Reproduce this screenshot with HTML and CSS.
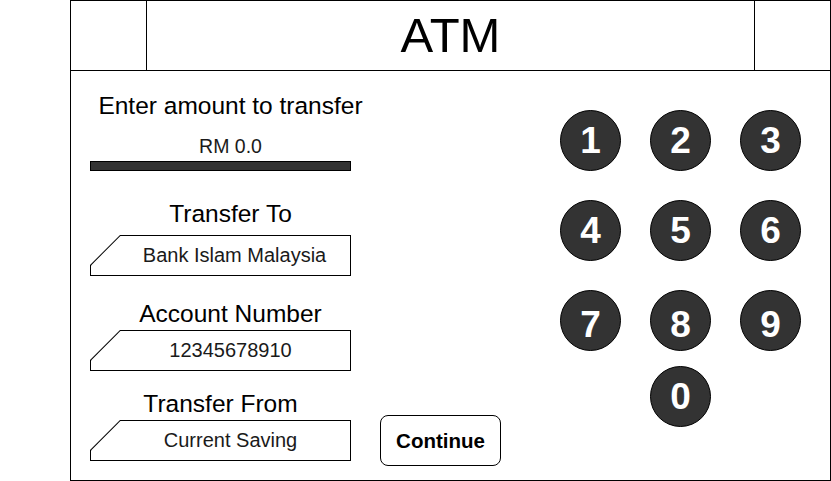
FILE: index.html
```html
<!DOCTYPE html>
<html lang="en">
<head>
<meta charset="utf-8">
<title>ATM</title>
<link rel="stylesheet" href="styles.css">
</head>
<body>
<div class="screen">
  <header class="header">
    <div class="header-side"></div>
    <div class="header-title">ATM</div>
    <div class="header-side"></div>
  </header>
  <main class="body">
    <section class="form">
      <div class="amount-title">Enter amount to transfer</div>
      <div class="amount-value">RM 0.0</div>
      <div class="amount-bar"></div>

      <div class="group group-first">
        <div class="label label-wide">Transfer To</div>
        <div class="field"><div class="field-inner field-inner-shift">Bank Islam Malaysia</div></div>
      </div>

      <div class="group group-second">
        <div class="label label-tight label-wide">Account Number</div>
        <div class="field"><div class="field-inner">12345678910</div></div>
      </div>

      <div class="last-row">
        <div class="group group-third">
          <div class="label label-tight">Transfer From</div>
          <div class="field"><div class="field-inner">Current Saving</div></div>
        </div>
        <button class="continue">Continue</button>
      </div>
    </section>

    <section class="keypad">
      <div class="key">1</div>
      <div class="key">2</div>
      <div class="key">3</div>
      <div class="key">4</div>
      <div class="key">5</div>
      <div class="key">6</div>
      <div class="key key-low">7</div>
      <div class="key key-low">8</div>
      <div class="key key-low">9</div>
      <div class="key key-zero">0</div>
    </section>
  </main>
</div>
</body>
</html>
```

FILE: styles.css
```css
* {
  box-sizing: border-box;
}

html, body {
  margin: 0;
  padding: 0;
  background: #ffffff;
}

body {
  font-family: "Liberation Sans", Arial, sans-serif;
  color: #000;
}

.screen {
  margin-left: 70px;
  width: 761px;
  height: 481px;
  border: 1px solid #000;
  display: flex;
  flex-direction: column;
}

.header {
  display: grid;
  grid-template-columns: 75px 1fr 75px;
  height: 70px;
  border-bottom: 1px solid #000;
}

.header-title {
  border-left: 1px solid #000;
  border-right: 1px solid #000;
  text-align: center;
  font-size: 49px;
  line-height: 69px;
}

.body {
  flex: 1;
  display: flex;
  padding-left: 19px;
}

.form {
  flex: 0 0 470px;
  display: flex;
  flex-direction: column;
}

.amount-title {
  width: 281px;
  text-align: center;
  font-size: 24.5px;
  line-height: 28px;
  margin-top: 21px;
}

.amount-value {
  width: 281px;
  text-align: center;
  font-size: 19.5px;
  line-height: 22px;
  margin-top: 15px;
  color: #1a1a1a;
}

.amount-bar {
  width: 261px;
  height: 10px;
  margin-top: 4px;
  background: #333333;
  border: 1px solid #000;
}

.group {
  width: 261px;
  display: flex;
  flex-direction: column;
}

.group-first {
  margin-top: 29px;
}

.group-second {
  margin-top: 24px;
}

.group-third {
  margin-top: 19px;
}

.label {
  text-align: center;
  font-size: 24.5px;
  line-height: 28px;
  margin-bottom: 7px;
}

.label-wide {
  padding-left: 20px;
}

.label-tight {
  margin-bottom: 2px;
}

.field {
  height: 41px;
  background: #000;
  clip-path: polygon(30px 0, 100% 0, 100% 100%, 0 100%, 0 30px);
  padding: 1px;
}

.field-inner {
  height: 100%;
  background: #fff;
  clip-path: polygon(29.4px 0, 100% 0, 100% 100%, 0 100%, 0 29.4px);
  padding-left: 20px;
  text-align: center;
  font-size: 20px;
  line-height: 39px;
  color: #1a1a1a;
}

.field-inner-shift {
  padding-left: 28px;
}

.last-row {
  display: flex;
  align-items: flex-end;
  gap: 29px;
}

.continue {
  width: 121px;
  height: 51px;
  margin-bottom: -5px;
  background: #fff;
  border: 1px solid #000;
  border-radius: 8px;
  font-family: "Liberation Sans", Arial, sans-serif;
  font-weight: bold;
  font-size: 20.5px;
  color: #000;
  padding: 0;
}

.keypad {
  padding-top: 39px;
  display: grid;
  grid-template-columns: repeat(3, 61px);
  grid-auto-rows: 61px;
  column-gap: 29px;
  row-gap: 29px;
  align-content: start;
}

.key {
  width: 61px;
  height: 61px;
  border-radius: 50%;
  background: #333333;
  border: 1px solid #000;
  color: #fff;
  font-weight: bold;
  font-size: 37px;
  line-height: 1;
  display: flex;
  align-items: center;
  justify-content: center;
}

.key-low {
  padding-top: 8px;
}

.key-zero {
  grid-column: 2;
  margin-top: -14px;
}
```
